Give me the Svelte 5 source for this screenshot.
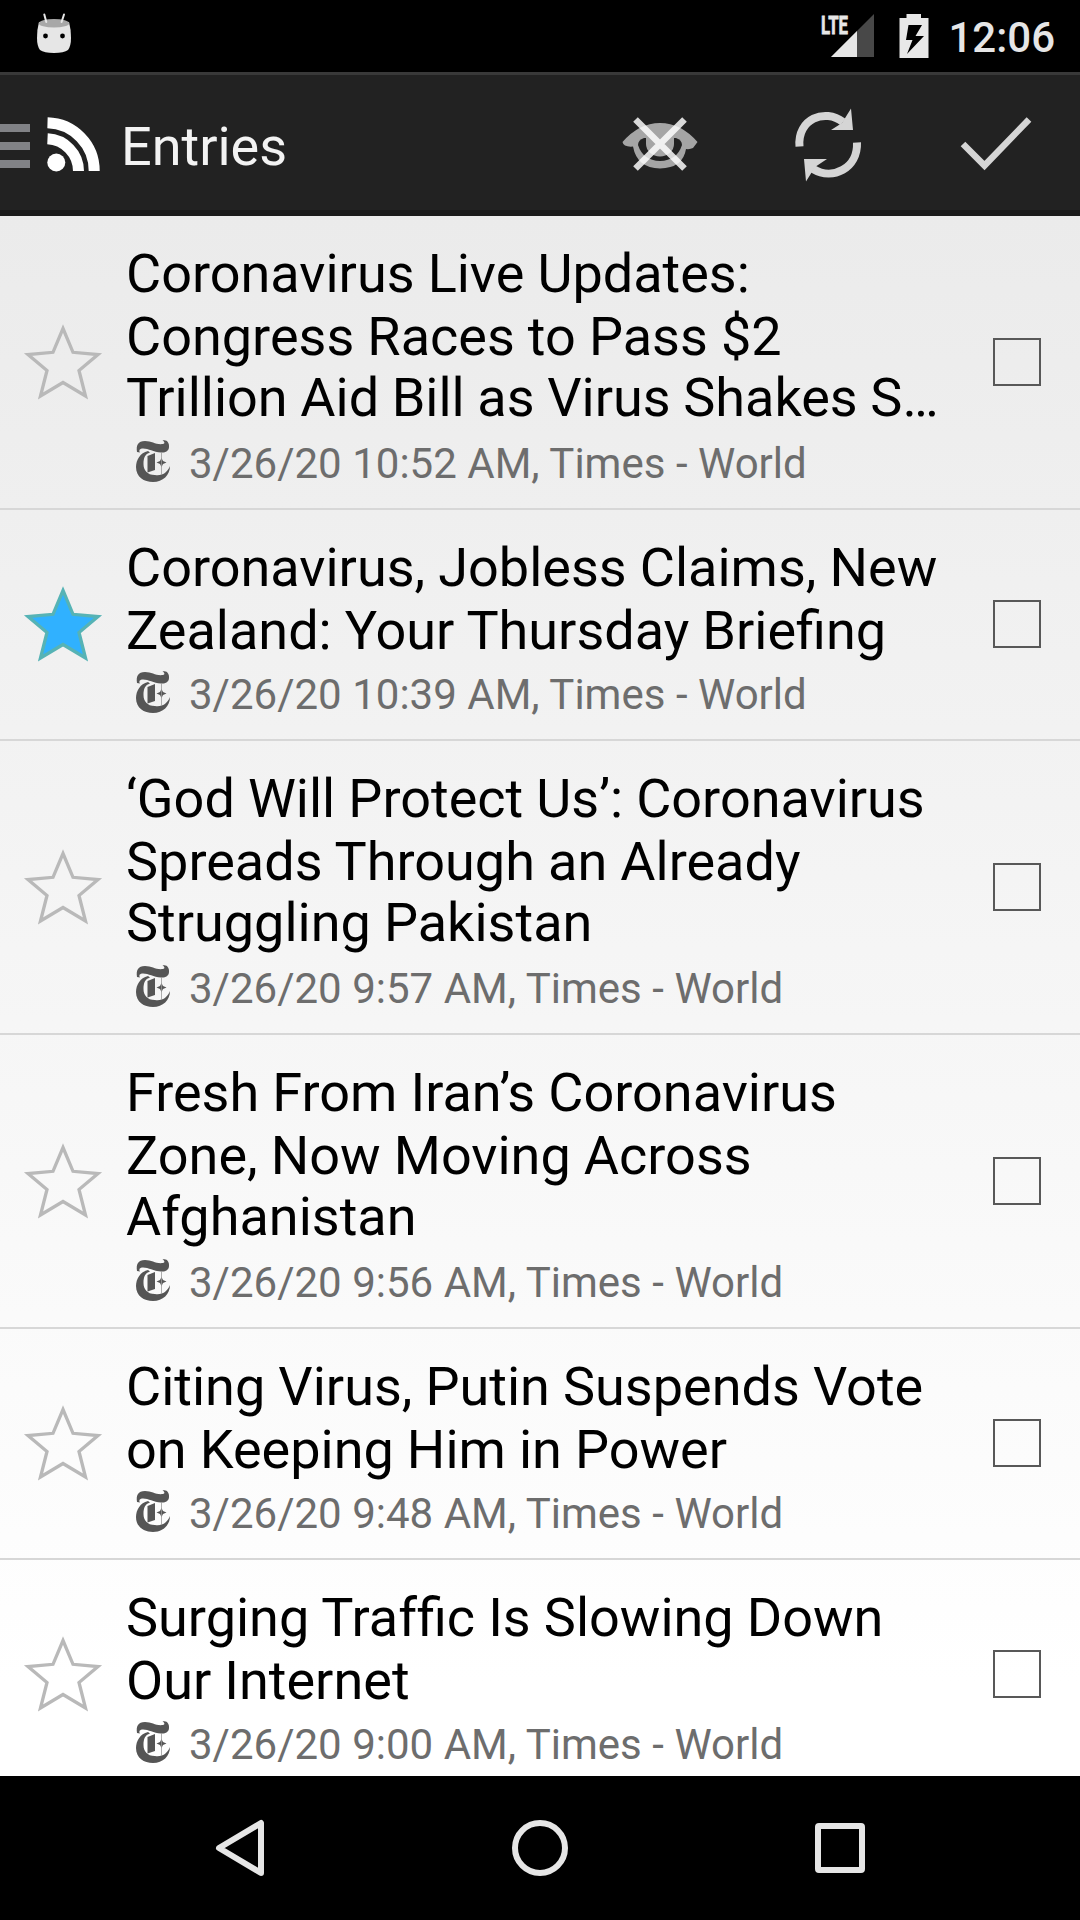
<script>
  const entries = [
    { lines: ['Coronavirus Live Updates:', 'Congress Races to Pass $2', 'Trillion Aid Bill as Virus Shakes S…'], time: '3/26/20 10:52 AM', starred: false },
    { lines: ['Coronavirus, Jobless Claims, New', 'Zealand: Your Thursday Briefing'], time: '3/26/20 10:39 AM', starred: true },
    { lines: ['‘God Will Protect Us’: Coronavirus', 'Spreads Through an Already', 'Struggling Pakistan'], time: '3/26/20 9:57 AM', starred: false },
    { lines: ['Fresh From Iran’s Coronavirus', 'Zone, Now Moving Across', 'Afghanistan'], time: '3/26/20 9:56 AM', starred: false },
    { lines: ['Citing Virus, Putin Suspends Vote', 'on Keeping Him in Power'], time: '3/26/20 9:48 AM', starred: false },
    { lines: ['Surging Traf\u200cfic Is Slowing Down', 'Our Internet'], time: '3/26/20 9:00 AM', starred: false }
  ];
</script>

<div class="screen">
  <header class="status">
    <svg class="droid" width="36" height="42" viewBox="0 0 36 42">
      <path d="M3 9Q1 16 1 25Q1 33 4 37Q8 40 18 40Q28 40 32 37Q35 33 35 25Q35 16 33 9Z" fill="#e6e6e6" />
      <ellipse cx="18" cy="10.2" rx="15.3" ry="4.3" fill="#a8a8a8" />
      <path d="M8.3 1.5L10.3 9M28 1.5L25.6 9" stroke="#e6e6e6" stroke-width="2" stroke-linecap="round" />
      <circle cx="9.5" cy="23" r="2.4" /><circle cx="26.5" cy="23" r="2.4" />
    </svg>
    <div class="indicators">
      <svg class="signal" width="54" height="46" viewBox="0 0 54 46">
        <path d="M53 2V45H10Z" fill="#484848" />
        <path d="M36 19V45H10Z" fill="#e6e6e6" />
        <text x="0" y="21.8" textLength="27" lengthAdjust="spacingAndGlyphs">LTE</text>
      </svg>
      <svg class="battery" width="30" height="44" viewBox="0 0 30 44">
        <path fill-rule="evenodd" d="M7.5 0H22V4H29.5V44H.5V4H7.5ZM9.5 11L7 26H13.5L8 40L25 22H16.5L23 11Z" fill="#e8e8e8" />
      </svg>
      <span class="clock">12:06</span>
    </div>
  </header>

  <nav class="bar">
    <div class="drawer"><i></i><i></i><i></i></div>
    <svg class="rss" width="54" height="56" viewBox="0 0 54 56">
      <circle cx="9.3" cy="45.5" r="9" fill="#fff" />
      <path d="M.5 21.8A32.5 32.5 0 0 1 31.5 54M.5 5.8A48 48 0 0 1 47.2 54" fill="none" stroke="#fff" stroke-width="11" />
    </svg>
    <h1>Entries</h1>
    <div class="actions">
      <svg width="78" height="78" viewBox="0 0 78 78">
        <path d="M1.500 38Q18 19 39 19Q60 19 76.500 38L72 44Q69 45.500 65 45Q62 64 39 64.500Q16 64 12 42.500Q7 43 4 41.500Q2 40.500 1.500 38Z" fill="#a5a5a5" />
        <path d="M23 34Q17 36 17 41Q22 56.500 39 57Q56 56.500 61 41Q61 36 55 34Z" fill="#222" />
        <path d="M25 32H53V40A14 12.500 0 0 1 25 40Z" fill="#a5a5a5" />
        <path d="M14.500 15.500L63.500 64.500M63.500 15.500L14.500 64.500" stroke="#fff" stroke-opacity=".83" stroke-width="6.500" />
      </svg>
      <svg width="78" height="78" viewBox="0 0 78 78">
        <path d="M10.500 42.500C8 15 36 4 54 18M68 38.500C69 64 44 77 24 65" fill="none" stroke="#d5d5d5" stroke-width="8" />
        <path d="M62 4.500L64 26H42L53 19ZM15 55H38L26 63L17 77.500Z" fill="#d5d5d5" />
      </svg>
      <svg width="78" height="78" viewBox="0 0 78 78">
        <path d="M6 40L27.500 61.500L72 15.500" fill="none" stroke="#d5d5d5" stroke-width="6.500" />
      </svg>
    </div>
  </nav>

  <main>
    {#each entries as entry}
      <article>
        <svg class="star" class:on={entry.starred} width="78" height="76" viewBox="0 0 78 76">
          <path d="M39 4.500L49 28.300L74 30.500L55 46.500L61.500 72L39 58.500L16.500 72L23 46.500L4 30.500L29 28.300Z" />
        </svg>
        <div class="body">
          <h2>{#each entry.lines as line}<span class:clamped={line.endsWith('…')}>{line}</span>{/each}</h2>
          <div class="meta">
            <svg width="36" height="44" viewBox="-1 -1 36 44">
              <path d="M1 12C0 5 2 1 9 1C16 1 20 5 27 4C29 3.500 29 2 26.500 .5C31-1 33.500 3 33 7C33 11 29 13 25 12.500C17 12 12 8 6 8.500C3 9 3 11 4 12.500Z" fill="#555" />
              <path d="M12 11C4 13 0 20 0 27C0 37 8 42 17 42C27 42 34 35 34 26C31 33 26 36 19 35C11 35 7.500 30 7.500 24C7.500 18 9 14 14 12.500Z" fill="#555" />
              <path d="M11.500 16L19 13V30L11.500 32.500ZM25.500 18L27 21L30.500 22.500L27 24L25.500 27L24 24L20.500 22.500L24 21Z" fill="#555" />
              <path d="M25.500 12V35" stroke="#999" stroke-width=".8" />
            </svg>
            <span>{entry.time}, Times - World</span>
          </div>
        </div>
        <div class="check"></div>
      </article>
    {/each}
  </main>

  <footer>
    <svg width="60" height="60" viewBox="0 0 60 60"><path d="M51 5V55L9 30Z" /></svg>
    <svg width="60" height="60" viewBox="0 0 60 60"><circle cx="30" cy="30" r="25" /></svg>
    <svg width="60" height="60" viewBox="0 0 60 60"><rect x="8" y="8" width="44" height="44" rx="1" /></svg>
  </footer>
</div>

<style>
  :global(body) { margin: 0; background: #000; }
  svg { display: block; flex: none; overflow: visible; }
  .screen { width: 1080px; height: 1920px; display: flex; flex-direction: column; overflow: hidden; font-family: Roboto, sans-serif; }
  .status { flex: none; height: 72px; box-sizing: border-box; background: #000; display: flex; justify-content: space-between; padding: 13px 25px 0 36px; }
  .indicators { display: flex; align-items: flex-start; }
  .signal { margin-right: 24px; margin-top: -1px; }
  .signal text { font: 700 26.5px Roboto, sans-serif; fill: #e6e6e6; stroke: #e6e6e6; stroke-width: .8; }
  .battery { margin: 1px 19px 0 0; }
  .clock { color: #e6e6e6; font-size: 42px; font-weight: 500; line-height: 50px; }
  .bar { flex: none; height: 144px; box-sizing: border-box; background: #222; border-top: 3px solid #393939; border-bottom: 6px solid #1b1b1b; display: flex; align-items: flex-start; }
  .drawer { display: flex; flex-direction: column; gap: 10px; margin-top: 49px; width: 30px; }
  .drawer i { height: 8px; background: #818286; }
  .rss { margin: 42px 0 0 17px; }
  h1 { margin: 40px 0 0 20px; color: #f3f3f3; font-weight: 400; font-size: 54px; line-height: 64px; }
  .actions { margin: 29px 45px 0 auto; display: flex; gap: 90px; }
  main { flex: none; height: 1560px; overflow: hidden; background: linear-gradient(#ebebeb, #fff 94%); }
  article { display: flex; align-items: center; border-bottom: 2px solid #d7d7d7; }
  .star { margin: 0 0 1px 24px; }
  .star path { fill: none; stroke: #b9b9b9; stroke-width: 3.3; }
  .star.on path { fill: #30b1ff; stroke: #56b3b5; }
  .body { width: 867px; padding: 26px 0 19px 24px; box-sizing: border-box; }
  h2 { display: flow-root; margin: 0; font-size: 54px; font-weight: 400; line-height: 63px; word-spacing: -.3px; color: #000; }
  h2 span { display: block; white-space: nowrap; }
  h2 span:nth-child(3) { margin: -2px 0 2px; }
  h2 .clamped { word-spacing: -.8px; }
  .meta { margin-top: 8px; display: flex; gap: 18px; padding-left: 9px; height: 50px; color: #6d6d6d; font-size: 42px; line-height: 50px; white-space: nowrap; word-spacing: .1px; }
  .check { width: 48px; height: 48px; box-sizing: border-box; border: 2px solid #585858; margin: 0 0 1px 24px; }
  footer { flex: none; height: 144px; background: #000; display: flex; justify-content: center; align-items: center; gap: 240px; }
  footer path, footer circle, footer rect { fill: none; stroke: #e6e6e6; stroke-width: 6; stroke-linejoin: round; }
</style>
